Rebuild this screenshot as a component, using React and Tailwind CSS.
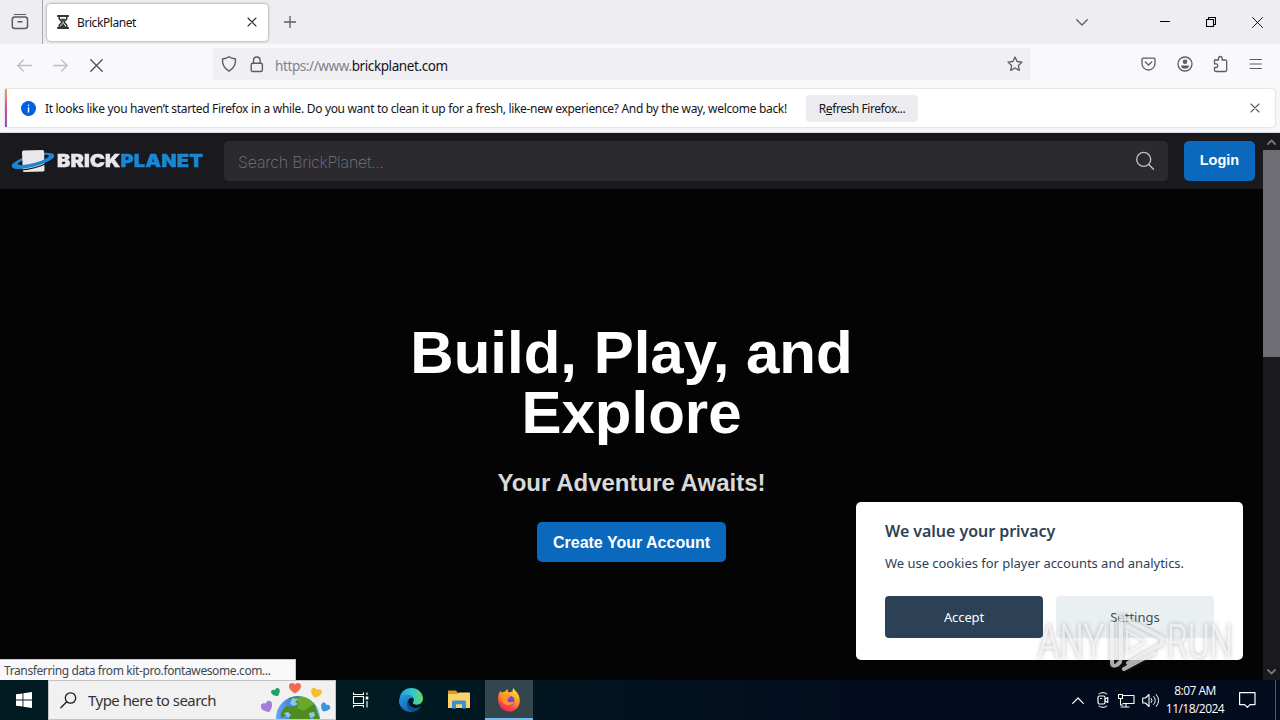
import React from 'react';

const Svg = ({ w, h, vb, className = '', children }) => (
  <svg width={w} height={h} viewBox={vb || `0 0 ${w} ${h}`} className={`block shrink-0 ${className}`} fill="none" stroke="currentColor" strokeLinecap="round" strokeLinejoin="round">
    {children}
  </svg>
);

function TabBar() {
  return (
    <div className="flex h-11 items-center bg-[#eeeef2] text-[#5b5b66]">
      <div className="flex h-11 w-[43px] items-center justify-center border-r border-[#a9a9b2] pr-[3px]">
        <Svg w={18} h={18}>
          <path d="M3.5 1.5h11" strokeWidth="1.2" />
          <rect x="1.3" y="4" width="15.2" height="11.5" rx="2.5" strokeWidth="1.5" />
          <path d="M7 8.8h4" strokeWidth="1.4" />
        </Svg>
      </div>
      <div className="ml-1 flex h-[37px] w-[221px] items-center rounded bg-white pl-2.5 shadow-[0_0_3px_rgba(0,0,0,0.45)]">
        <Svg w={12} h={14} className="text-[#333338]">
          <path d="M0.8 1h10.4M0.8 13h10.4" strokeWidth="1.8" />
          <path d="M2.2 1.5v2.2L5 7l-2.8 3.3v2.2M9.8 1.5v2.2L7 7l2.8 3.3v2.2" strokeWidth="1.5" />
          <path d="M4 4h4L6 6.5zM6 8.500l2.500 3.500h-5z" fill="currentColor" strokeWidth="0.6" />
        </Svg>
        <span className="ml-2 w-[170px] pt-0.5 text-xs leading-4 tracking-[-0.42px] text-[#15141a]">BrickPlanet</span>
        <Svg w={10} h={10} className="text-[#2b2a33]">
          <path d="M1 1l8 8M9 1l-8 8" strokeWidth="1.1" />
        </Svg>
      </div>
      <Svg w={12} h={12} className="ml-4">
        <path d="M6 0.5v11M0.5 6h11" strokeWidth="1.3" />
      </Svg>
      <div className="ml-auto flex items-center pr-[17px]">
        <Svg w={12} h={7} className="mr-[72px]">
          <path d="M0.7 0.7L6 6l5.3-5.300" strokeWidth="1.3" />
        </Svg>
        <Svg w={10} h={10} className="mr-9 text-black">
          <path d="M0 4.500h10" strokeLinecap="butt" />
        </Svg>
        <Svg w={10} h={10} className="mr-9 text-black">
          <path d="M0.500 2.500h7v7h-7zM2.500 2.500v-2h7v7h-2" strokeWidth="1.1" />
        </Svg>
        <Svg w={11} h={11} className="text-black">
          <path d="M0.500 0.500l10 10M10.500 0.500l-10 10" strokeWidth="0.9" />
        </Svg>
      </div>
    </div>
  );
}

function Toolbar() {
  return (
    <div className="flex h-11 items-start bg-[#f9f9fb] pt-1 text-[#5b5b66]">
      <div className="flex h-8 w-[213px] items-center pl-[17px] pt-0.5">
        <Svg w={15} h={13} className="text-[#bdbdc4]">
          <path d="M14.300 6.500H1M6.300 1L0.800 6.500l5.500 5.500" strokeWidth="1.3" />
        </Svg>
        <Svg w={15} h={13} className="ml-[21px] text-[#bdbdc4]">
          <path d="M0.700 6.500H14M8.700 1l5.500 5.500L8.700 12" strokeWidth="1.3" />
        </Svg>
        <Svg w={13} h={13} className="ml-[22px] text-[#4c4c57]">
          <path d="M0.800 0.800l11.400 11.400M12.200 0.800L0.800 12.200" strokeWidth="1.3" />
        </Svg>
      </div>
      <div className="flex h-8 w-[817px] items-center bg-[#f0f0f4] pl-2 pr-[7px]">
        <Svg w={16} h={18}>
          <path d="M8 1.700c2 1.600 4.200 2 6.500 2.300 0.400 5.500-1.500 9.300-6.500 12.200C3 13.300 1.100 9.500 1.500 4 3.800 3.700 6 3.300 8 1.700z" strokeWidth="1.4" />
        </Svg>
        <Svg w={14} h={17} className="ml-[13px]">
          <rect x="1.2" y="7.200" width="11.200" height="8.300" rx="1.600" strokeWidth="1.400" />
          <path d="M3.500 7V4.300a3.300 3.300 0 016.600 0V7" strokeWidth="1.400" />
        </Svg>
        <span className="ml-[11px] pt-[3px] text-[13.500px] leading-5 tracking-[-0.4px] text-[#81818a]">
          https://www.<span className="text-[#15141a]">brickplanet.com</span>
        </span>
        <Svg w={16} h={16} className="ml-auto">
          <path d="M8 1l2.100 4.500 4.900 0.600-3.600 3.400 0.900 4.900L8 12l-4.300 2.400 0.900-4.900L1 6.100l4.900-0.600z" strokeWidth="1.300" />
        </Svg>
      </div>
      <div className="ml-auto flex h-8 items-center pr-[18px]">
        <Svg w={15} h={14} className="mr-[21px]">
          <path d="M2.200 1.200h10.600a1.200 1.200 0 011.200 1.200v4.100a6.500 6.500 0 01-13 0V2.400A1.200 1.200 0 012.200 1.200z" strokeWidth="1.300" />
          <path d="M4.300 5l3.200 3 3.200-3" strokeWidth="1.300" />
        </Svg>
        <Svg w={16} h={16} className="mr-[20px]">
          <circle cx="8" cy="8" r="7" strokeWidth="1.300" />
          <circle cx="8" cy="5.800" r="2.300" fill="currentColor" stroke="none" />
          <path d="M4 9.500h8c0 2-1.700 3.300-4 3.300s-4-1.300-4-3.300z" fill="currentColor" stroke="none" />
        </Svg>
        <Svg w={16} h={18} className="mr-5">
          <path d="M1.500 5h4V3.300a1.800 1.800 0 013.600 0V5h3.200a1.400 1.400 0 011.400 1.400v8.700a1.400 1.400 0 01-1.400 1.400H2.900a1.400 1.400 0 01-1.400-1.400v-2.600H3a1.800 1.800 0 000-3.600H1.500z" strokeWidth="1.300" />
        </Svg>
        <Svg w={13} h={12}>
          <path d="M1 1.500h11.300M1 6h11.300M1 10.500h11.300" strokeWidth="1.200" />
        </Svg>
      </div>
    </div>
  );
}

function Notice() {
  return (
    <div className="h-[45px] border-b border-[#d5dbe6] bg-[#f7f7f9] px-[5px] pt-px">
      <div className="flex h-[38px] items-center overflow-hidden rounded-r bg-white pr-[15px] text-xs leading-4 text-[#15141a] shadow-[0_0_2px_rgba(0,0,0,0.25)]">
        <div className="h-full w-0.5 bg-gradient-to-b from-[#ff9a50] via-[#d0508f] to-[#8750b8]" />
        <Svg w={15} h={15} className="ml-[14px]">
          <circle cx="7.500" cy="7.500" r="7.500" fill="#0060df" stroke="none" />
          <path d="M7.500 6.800v4.200M7.500 4.200v0.200" stroke="#fff" strokeWidth="1.400" />
        </Svg>
        <span className="ml-[9px] w-[761px] whitespace-nowrap pt-0.5 tracking-[-0.322px]">
          It looks like you haven’t started Firefox in a while. Do you want to clean it up for a fresh, like-new experience? And by the way, welcome back!
        </span>
        <button className="h-[27px] w-[112px] whitespace-nowrap rounded bg-[#ececf0] pt-0.5 tracking-[-0.43px]">
          R<span className="underline">e</span>fresh Firefox...
        </button>
        <Svg w={10} h={10} className="ml-auto text-[#5b5b66]">
          <path d="M1 1l8 8M9 1l-8 8" strokeWidth="1.100" />
        </Svg>
      </div>
    </div>
  );
}

function Logo() {
  return (
    <div className="flex w-[193px] items-center">
      <svg width="44" height="26" viewBox="0 0 44 26" className="block shrink-0">
        <defs>
          <clipPath id="frontHalf"><rect x="-24" y="1" width="48" height="14" /></clipPath>
        </defs>
        <g transform="translate(22 12.800) rotate(-15)">
          <path fillRule="evenodd" d="M-22 0a22 6 0 1044 0a22 6 0 10-44 0zM-15.500-.800a16 3 0 1032 0a16 3 0 10-32 0z" fill="#1b87d2" />
        </g>
        <path d="M12.500 2.500L31.500 2q1.500 0 1.600 1.500l.4 18.500q0 1.500-1.500 1.600l-18.500.4q-1.600 0-1.700-1.500L11 4q0-1.500 1.500-1.500z" fill="#e9e7ec" />
        <g transform="translate(22 12.800) rotate(-15)">
          <g clipPath="url(#frontHalf)">
            <path fillRule="evenodd" d="M-22 0a22 6 0 1044 0a22 6 0 10-44 0zM-15.500-.800a16 3.200 0 1032 0a16 3.200 0 10-32 0z" fill="#1b87d2" />
            <path d="M-16 5.200Q0 9 16 5.200" fill="none" stroke="#1a191e" strokeWidth="1.100" />
          </g>
        </g>
      </svg>
      <div className="ml-[2px] origin-left scale-x-[1.110] whitespace-nowrap font-['Inter',sans-serif] text-[18px] font-black leading-6 tracking-[0.15px] text-[#e9e7ec] [-webkit-text-stroke:0.400px]">
        BRICK<span className="text-[#1b87d2]">PLANET</span>
      </div>
    </div>
  );
}

function SiteHeader() {
  return (
    <header className="flex h-14 items-center bg-[#1a191e] pl-[11px] pr-2 font-['Liberation_Sans',Arial,sans-serif]">
      <Logo />
      <div className="ml-5 flex h-10 w-[944px] items-center justify-between rounded-[5px] bg-[#2b2a2f] pl-[14px] pr-[13px]">
        <span className="pt-px font-['Inter',sans-serif] text-[16px] font-extralight tracking-[-0.22px] text-[#77767c]">Search BrickPlanet...</span>
        <Svg w={20} h={20} className="text-[#bdbcc2]">
          <circle cx="8.700" cy="8.400" r="7" strokeWidth="1.400" />
          <path d="M13.800 13.500l4.700 4.700" strokeWidth="1.500" />
        </Svg>
      </div>
      <button className="ml-4 h-10 w-[71px] rounded-[5px] bg-[#0a68bd] text-[14.500px] font-bold text-white">Login</button>
    </header>
  );
}

function PrivacyCard() {
  return (
    <div className="absolute left-[856px] top-[369px] h-[158px] w-[387px] rounded-[5px] bg-white px-[29px] pt-[17px] text-[#2d4156]">
      <h2 className="whitespace-nowrap text-base font-semibold leading-6 tracking-[-0.04px]">We value your privacy</h2>
      <p className="mt-2 whitespace-nowrap text-[13px] leading-6 tracking-[-0.030px]">We use cookies for player accounts and analytics.</p>
      <div className="mt-[21px] flex gap-[13px] text-[13px]">
        <button className="h-[42px] w-[158px] rounded bg-[#2d4156] pt-0.5 tracking-[-0.1px] text-white">Accept</button>
        <button className="h-[42px] w-[158px] rounded bg-[#eaeff2] pt-0.5 text-[#40505a]">Settings</button>
      </div>
    </div>
  );
}

function Watermark() {
  return (
    <svg width="210" height="70" viewBox="0 0 210 70" className="pointer-events-none absolute left-[1030px] top-[605px] drop-shadow-[0_0_2px_rgba(70,70,70,0.6)]">
      <g opacity="0.65" fill="#fff" stroke="#fff" fontFamily="Roboto, sans-serif" fontSize="49" fontWeight="300" strokeWidth="0.600">
        <text x="8" y="53" textLength="66" lengthAdjust="spacingAndGlyphs">ANY</text>
        <text x="137" y="53" textLength="66" lengthAdjust="spacingAndGlyphs">RUN</text>
        <g fill="none" strokeWidth="4" strokeLinejoin="round" strokeLinecap="round">
          <path d="M82 18v40q0 4 5 2l3-3M91 54V11l41 22v6L98 58M94 64l30-16" />
          <path d="M97 26l18 11-18 11z" strokeWidth="1.500" />
        </g>
      </g>
    </svg>
  );
}

function Page() {
  return (
    <div className="relative flex h-[547px] bg-[#040404]">
      <div className="flex w-[1263px] flex-col">
        <SiteHeader />
        <main className="flex flex-1 flex-col items-center pt-[134px] font-['Liberation_Sans',Arial,sans-serif] font-bold">
          <h1 className="w-[480px] text-center text-[60px] leading-[60px] text-white">Build, Play, and Explore</h1>
          <p className="mt-[22px] text-2xl leading-9 text-[#d9d9d9]">Your Adventure Awaits!</p>
          <button className="mt-[21px] h-10 w-[189px] rounded-[5px] bg-[#0a68bd] pt-0.5 text-base text-white">Create Your Account</button>
        </main>
      </div>
      <div className="flex w-[17px] flex-col items-center bg-[#1a191e] text-[#77767d]">
        <div className="flex h-[17px] items-center">
          <Svg w={9} h={6}><path d="M1 5l3.500-3.500L8 5" strokeWidth="1.800" /></Svg>
        </div>
        <div className="h-[207px] w-full bg-[#6e6d73]" />
        <div className="mt-auto flex h-[17px] items-center">
          <Svg w={9} h={6}><path d="M1 1l3.500 3.500L8 1" strokeWidth="1.800" /></Svg>
        </div>
      </div>
      <PrivacyCard />
      <div className="absolute bottom-0 left-0 h-[21px] w-[296px] whitespace-nowrap border-r border-t border-[#c8c8cc] bg-[#f9f9fb] pl-1 pt-0.5 text-xs leading-[18px] tracking-[-0.390px] text-[#45454d]">
        Transferring data from kit-pro.fontawesome.com...
      </div>
    </div>
  );
}

function Globe() {
  return (
    <svg width="72" height="38" viewBox="0 0 72 38" className="block shrink-0">
      <defs>
        <linearGradient id="sea" x1="0" x2="1"><stop offset="0" stopColor="#6ea4f5" /><stop offset="0.500" stopColor="#2d76d8" /><stop offset="1" stopColor="#7fc8f5" /></linearGradient>
        <clipPath id="ball"><circle cx="37" cy="37" r="22" /></clipPath>
        <path id="heart" d="M0 5.500C-8 1-7-5-3-5-1-5 0-3.800 0-3 0-3.800 1-5 3-5 7-5 8 1 0 5.500z" />
      </defs>
      <circle cx="37" cy="37" r="22" fill="url(#sea)" />
      <g clipPath="url(#ball)">
        <path d="M27 17c7-4 22 0 27 7l5 14-5 1-3-3-5 6H32l-6-8-6 3c-1-5 2-10 6-12l4 1 6-2-2-3z" fill="#4f8a22" />
        <path d="M35 17l10-2 8 8-5 3-5 4-7-3 2-4z" fill="#69a82b" />
        <path d="M31 17l6 1-3 3 3 2-4 2-4-2M48 32l5-1 1 4-5 2M23 32l4-1 3 3-3 3" fill="#8cc8ec" />
      </g>
      <use href="#heart" transform="translate(34 7)" fill="#f16b51" />
      <use href="#heart" transform="translate(15 11.500) rotate(-25) scale(.75)" fill="#21a366" />
      <use href="#heart" transform="translate(55 12) rotate(18) scale(.9)" fill="#f8bd2d" />
      <use href="#heart" transform="translate(6 26) rotate(-25)" fill="#a77bdc" />
      <use href="#heart" transform="translate(64 26.500) rotate(30) scale(.8)" fill="#3695df" />
    </svg>
  );
}

function Taskbar() {
  return (
    <footer className="flex h-10 items-center bg-gradient-to-r from-[#001a22] from-30% to-[#030b1e] to-70%">
      <div className="flex w-12 justify-center">
        <svg width="16" height="16" viewBox="0 0 16 16" fill="#fff"><path d="M0 2.300L6.500 1.400v6.100H0zM7.400 1.300L16 0v7.500H7.400zM0 8.400h6.500v6.200L0 13.700zM7.400 8.400H16V16l-8.600-1.200z" /></svg>
      </div>
      <div className="flex h-10 w-[288px] items-center border border-[#c4c4c4] bg-[#f1f1f1] pl-[11px] text-[#1c1c1c]">
        <Svg w={17} h={17}>
          <circle cx="10.500" cy="6" r="5.200" strokeWidth="1.300" />
          <path d="M6.700 9.800L0.800 15.700" strokeWidth="1.300" />
        </Svg>
        <span className="ml-[11px] w-[173px] whitespace-nowrap text-[15px] leading-5 tracking-[-0.530px] text-[#333]">Type here to search</span>
        <Globe />
      </div>
      <div className="flex w-12 justify-center text-white">
        <Svg w={17} h={16}>
          <path d="M1.500 0.500v2h10v-2M1.500 15.500v-2h10v2M1.500 4.500h10v7h-10zM15 0.500v2.500M15 9v6.500" strokeWidth="1.100" strokeLinecap="butt" />
          <path d="M13.700 4.500h2.600v3h-2.600z" fill="currentColor" stroke="none" />
        </Svg>
      </div>
      <div className="ml-[3px] flex w-12 justify-center">
        <svg width="24" height="24" viewBox="0 0 24 24">
          <defs>
            <linearGradient id="edgeTop" x1="0" x2="1"><stop offset="0" stopColor="#239bd9" /><stop offset="0.550" stopColor="#38c5cf" /><stop offset="1" stopColor="#63db62" /></linearGradient>
            <linearGradient id="edgeLow" x1="0" y1="0" x2="0.700" y2="1"><stop offset="0" stopColor="#259ee3" /><stop offset="1" stopColor="#1359a8" /></linearGradient>
          </defs>
          <path d="M0.500 11C1 4.500 6 0 12.200 0 19 0 24 5 24 10.500c0 3.700-2.800 6.200-6.200 6.200-2.700 0-4-1-4-1.900 0-.8 1.100-1.200 1.100-3 0-2.400-2.500-4.600-6-4.600C5 7.200 1.600 9 .5 11z" fill="url(#edgeTop)" />
          <path d="M0 12.500C.6 9 4 6.600 8 6.700c3.700 0 6.600 2 6.900 4.800-1-1.200-2.300-1.600-3.500-1.300-2 .7-2.900 3-2 5.400 1.200 3.500 5.200 5.200 9.200 4.300 1.400-.3 2.600-.9 3.400-1.300C19.800 22 16 24 12 24 5.300 24-.3 18.500 0 12.500z" fill="url(#edgeLow)" />
          <path d="M9.400 15.600c1.200 3.500 5.200 5.200 9.200 4.300 1.400-.3 2.600-.9 3.400-1.300-1.700 2.700-4.800 4.600-8 5.200-4-1-7-4.800-6-9.500.4-1.700 1.600-3.500 3.400-4.100-2 .7-2.900 3-2 5.400z" fill="#154c8f" />
        </svg>
      </div>
      <div className="flex w-12 justify-center">
        <svg width="22" height="20" viewBox="0 0 22 20">
          <path d="M0 1.500C0 .7.500.5 1 .5h7l2 2.500h11v4H0z" fill="#e39a18" />
          <path d="M0 4h9l2-1.500h11V18H0z" fill="#fbd366" />
          <path d="M4 18.500v-6.300c0-1 .6-1.700 1.600-1.700h10.800c1 0 1.600.7 1.600 1.700v6.300h-4v-4.200H8v4.200z" fill="#3a91d7" />
        </svg>
      </div>
      <div className="ml-[2px] flex h-10 w-12 items-center justify-center border-b-2 border-[#76b9ed] bg-[#33464d] pt-0.5">
        <svg width="24" height="24" viewBox="0 0 24 24">
          <defs><linearGradient id="fox" x1="0.800" y1="0" x2="0.300" y2="1"><stop offset="0" stopColor="#ffe83e" /><stop offset="0.450" stopColor="#ff9a26" /><stop offset="0.750" stopColor="#ff483b" /><stop offset="1" stopColor="#e8197a" /></linearGradient></defs>
          <path d="M2 5.500c.5-1.300 1-2.200 1.800-2.800.1 1 .4 1.600 1 2.100C5.800 4 6.700 3.700 8 3.700 9 2.200 10 1.500 11 1.300c-.5 1.200-.3 2.300.5 3.200 1.500-.8 3-1 4.100-.8-.3-1.500.1-2.700 1.100-3.700.6 2.600 3 3.500 4.300 6 4.300 7.500.4 17.500-9 17.700C4 23.700-1.300 14 2 5.500z" fill="url(#fox)" />
          <circle cx="12.500" cy="12.700" r="5" fill="#7542e5" />
          <path d="M3.500 9c1.500-2.600 5-3 6.900-1.200 1.200.3 2.500.1 3.300.2-.3 1.600-2.500 2-3 3.100-.5 1.200.2 2.500 1.600 3.100 1.700.6 3.300-1 4.700-.3-1.400 3.200-6 4.500-9.500 2.100C5 14.300 4 12 3.500 9z" fill="#ff9128" />
        </svg>
      </div>
      <div className="ml-auto flex items-center text-white">
        <Svg w={12} h={7} className="mr-[13px]"><path d="M0.700 6.300L6 1l5.300 5.300" strokeWidth="1.200" /></Svg>
        <Svg w={12} h={18} className="mr-[9px]">
          <path d="M2 3Q6 0 10 3M2 15q4 3 8 0" strokeWidth="1" />
          <rect x="1" y="5" width="7" height="8" rx="1.500" strokeWidth="1.200" />
          <path d="M8 8l2.800-1.500v5L8 10M3.500 7.500h1" strokeWidth="1.100" />
        </Svg>
        <Svg w={17} h={15} className="mr-[7px]">
          <path d="M5 2.500h11v8H5M3 14h8M8 10.500V14M2.500 5.500V12H5M0.500 1.500h4v4h-4z" strokeWidth="1.100" />
        </Svg>
        <Svg w={18} h={15} className="mr-[5px]">
          <path d="M0.700 5h2.800L7 1.500v12L3.500 10H0.700z" strokeWidth="1.100" />
          <path d="M9.300 5.500q1.700 2 0 4M11.700 3.500q3.300 4 0 8M14.200 1.500q5 6 0 12" strokeWidth="1" />
        </Svg>
        <div className="w-[60px] whitespace-nowrap text-center font-['Open_Sans',sans-serif] text-xs leading-[18px] tracking-[-0.530px]">
          <div>8:07 AM</div>
          <div className="-mx-2">11/18/2024</div>
        </div>
        <Svg w={17} h={16} className="ml-[14px]">
          <path d="M0.600 0.600h15.400v12h-5l-2.700 2.700-2.700-2.700h-5z" strokeWidth="1.200" />
        </Svg>
        <div className="ml-[19px] h-10 w-[5px] border-l border-[#53586a]" />
      </div>
    </footer>
  );
}

export default function App() {
  return (
    <div className="relative h-[720px] w-[1280px] overflow-hidden bg-black font-['Noto_Sans','Open_Sans',sans-serif]">
      <TabBar />
      <Toolbar />
      <Notice />
      <Page />
      <Taskbar />
      <Watermark />
    </div>
  );
}
